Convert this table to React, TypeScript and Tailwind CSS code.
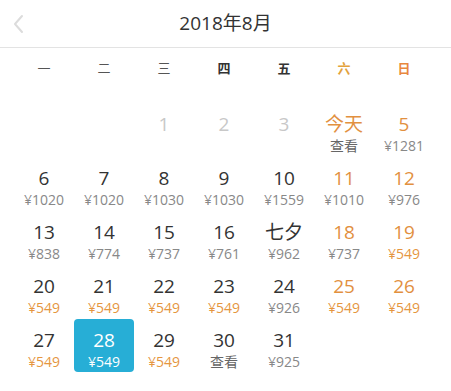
import React from 'react';

type Day = {
  label: string;
  sub?: string;
  dim?: boolean;
  weekend?: boolean;
  cheap?: boolean;
  selected?: boolean;
};

const weekdays = [
  { name: '一', cls: 'text-[#555]' },
  { name: '二', cls: 'text-[#555]' },
  { name: '三', cls: 'text-[#555]' },
  { name: '四', cls: 'text-[#333] font-bold' },
  { name: '五', cls: 'text-[#333] font-bold' },
  { name: '六', cls: 'text-[#e3a23c] font-bold' },
  { name: '日', cls: 'text-[#e8873e] font-bold' },
];

const days: (Day | null)[] = [
  null,
  null,
  { label: '1', dim: true },
  { label: '2', dim: true },
  { label: '3', dim: true },
  { label: '今天', sub: '查看', weekend: true },
  { label: '5', sub: '¥1281', weekend: true },
  { label: '6', sub: '¥1020' },
  { label: '7', sub: '¥1020' },
  { label: '8', sub: '¥1030' },
  { label: '9', sub: '¥1030' },
  { label: '10', sub: '¥1559' },
  { label: '11', sub: '¥1010', weekend: true },
  { label: '12', sub: '¥976', weekend: true },
  { label: '13', sub: '¥838' },
  { label: '14', sub: '¥774' },
  { label: '15', sub: '¥737' },
  { label: '16', sub: '¥761' },
  { label: '七夕', sub: '¥962' },
  { label: '18', sub: '¥737', weekend: true },
  { label: '19', sub: '¥549', weekend: true, cheap: true },
  { label: '20', sub: '¥549', cheap: true },
  { label: '21', sub: '¥549', cheap: true },
  { label: '22', sub: '¥549', cheap: true },
  { label: '23', sub: '¥549', cheap: true },
  { label: '24', sub: '¥926' },
  { label: '25', sub: '¥549', weekend: true, cheap: true },
  { label: '26', sub: '¥549', weekend: true, cheap: true },
  { label: '27', sub: '¥549', cheap: true },
  { label: '28', sub: '¥549', cheap: true, selected: true },
  { label: '29', sub: '¥549', cheap: true },
  { label: '30', sub: '查看' },
  { label: '31', sub: '¥925' },
];

const DayCell = ({ day }: { day: Day | null }) => {
  if (!day) return <div className="h-[53px]" />;

  let labelColor = 'text-[#333]';
  if (day.dim) labelColor = 'text-[#c8c8c8]';
  else if (day.weekend) labelColor = 'text-[#e2903f]';

  let subColor = 'text-[#888]';
  if (day.sub === '查看') subColor = 'text-[#666]';
  else if (day.cheap) subColor = 'text-[#e5963f]';

  if (day.selected) {
    labelColor = 'text-white';
    subColor = 'text-white';
  }

  return (
    <div
      className={`h-[53px] flex flex-col items-center pt-[9px] rounded ${
        day.selected ? 'bg-[#27aed6]' : ''
      }`}
    >
      <span className={`text-[19px] leading-[24px] ${labelColor}`}>{day.label}</span>
      {day.sub && (
        <span className={`text-[14px] leading-[19px] ${subColor}`}>{day.sub}</span>
      )}
    </div>
  );
};

const App = () => {
  return (
    <div
      className="w-[451px] h-[391px] bg-white overflow-hidden"
      style={{ fontFamily: '"Open Sans", "Noto Sans CJK SC", sans-serif' }}
    >
      {/* Header */}
      <div className="relative h-12 border-b border-[#e3e3e3] flex items-center justify-center">
        <svg
          className="absolute left-[12px] top-[14px]"
          width="12"
          height="20"
          viewBox="0 0 12 20"
          fill="none"
        >
          <path d="M10 2 L3 10 L10 18" stroke="#dcdcdc" strokeWidth="2" strokeLinecap="round" strokeLinejoin="round" />
        </svg>
        <span className="text-[19px] text-[#333]">2018年8月</span>
      </div>

      {/* Weekday labels */}
      <div className="grid grid-cols-[repeat(7,60px)] px-[14px] h-[41px] items-center">
        {weekdays.map((w) => (
          <div key={w.name} className={`text-center text-[13px] ${w.cls}`}>
            {w.name}
          </div>
        ))}
      </div>

      {/* Days */}
      <div className="grid grid-cols-[repeat(7,60px)] gap-y-px px-[14px] pt-[14px]">
        {days.map((d, i) => (
          <DayCell key={i} day={d} />
        ))}
      </div>
    </div>
  );
};

export default App;
